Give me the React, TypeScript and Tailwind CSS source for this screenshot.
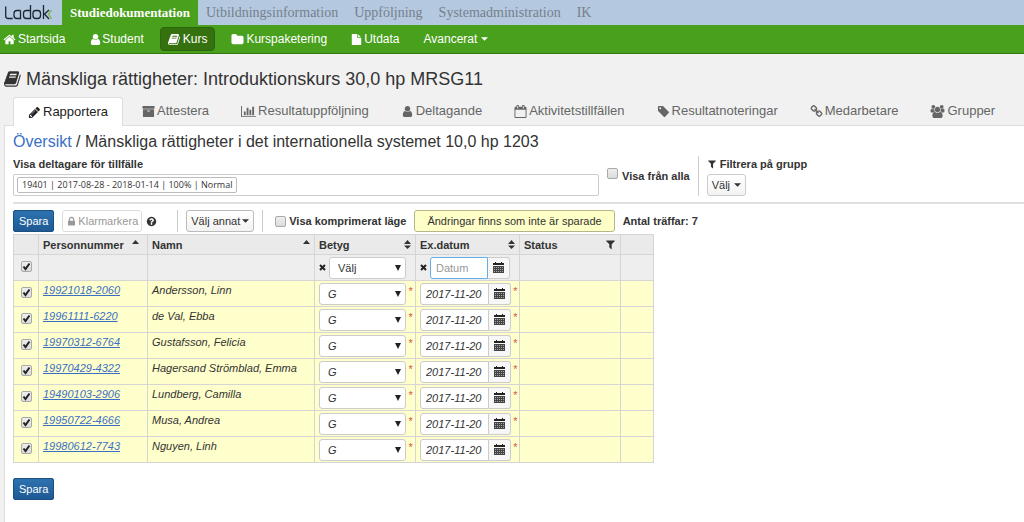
import React, { useState } from 'react';

const icons = {
  home: { w: 1792, d: 'M1472 992v480q0 26-19 45t-45 19h-384v-384h-256v384h-384q-26 0-45-19t-19-45v-480q0-1 .5-3t.5-3l575-474 575 474q1 2 1 6zm223-69l-62 74q-8 9-21 11h-3q-13 0-21-7l-692-577-692 577q-12 8-24 7-13-2-21-11l-62-74q-8-10-7-23.5t11-21.5l719-599q32-26 76-26t76 26l244 204v-195q0-14 9-23t23-9h192q14 0 23 9t9 23v408l219 182q10 8 11 21.5t-7 23.5z' },
  user: { w: 1792, d: 'M1536 1399q0 109-62.5 187t-150.5 78h-854q-88 0-150.5-78t-62.5-187q0-85 8.5-160.5t31.5-152 58.5-131 94-89 134.5-34.5q131 128 313 128t313-128q76 0 134.5 34.5t94 89 58.5 131 31.5 152 8.5 160.5zm-256-887q0 159-112.5 271.5t-271.5 112.5-271.5-112.5-112.5-271.5 112.5-271.5 271.5-112.5 271.5 112.5 112.5 271.5z' },
  book: { w: 1792, d: 'M1639 478q40 57 18 129l-275 906q-19 64-76.5 107.5t-122.5 43.5h-923q-77 0-148.5-53.5t-99.5-131.5q-24-67-2-127 0-4 3-27t4-37q1-8-3-21.5t-3-19.5q2-11 8-21t16.5-23.5 16.5-23.5q23-38 45-91.5t30-91.5q3-10 .5-30t-.5-28q3-11 17-28t17-23q21-36 42-92t25-90q1-9-2.5-32t.5-28q4-13 22-30.5t22-22.5q19-26 42.5-84.5t27.5-96.5q1-8-3-25.5t-2-26.5q2-8 9-18t18-23 17-21q8-12 16.5-30.5t15-35 16-36 19.5-32 26.5-23.5 36-11.5 47.5 5.5l-1 3q38-9 51-9h761q74 0 114 56t18 130l-274 906q-36 119-71.5 153.5t-128.5 34.5h-869q-27 0-38 15-11 16-1 43 24 70 144 70h923q29 0 56-15.5t35-41.5l300-987q7-22 5-57 38 15 59 43zm-1064 2q-4 13 2 22.5t20 9.5h608q13 0 25.5-9.5t16.5-22.5l21-64q4-13-2-22.5t-20-9.5h-608q-13 0-25.5 9.5t-16.5 22.5zm-83 256q-4 13 2 22.5t20 9.5h608q13 0 25.5-9.5t16.5-22.5l21-64q4-13-2-22.5t-20-9.5h-608q-13 0-25.5 9.5t-16.5 22.5z' },
  folder: { w: 1792, d: 'M1728 608v704q0 92-66 158t-158 66h-1216q-92 0-158-66t-66-158v-960q0-92 66-158t158-66h320q92 0 158 66t66 158v32h672q92 0 158 66t66 158z' },
  file: { w: 1792, d: 'M1152 512v-472q22 14 36 28l408 408q14 14 28 36h-472zm-128 32q0 40 28 68t68 28h544v1056q0 40-28 68t-68 28h-1344q-40 0-68-28t-28-68v-1600q0-40 28-68t68-28h800v544z' },
  pencil: { w: 1792, d: 'M491 1536l91-91-235-235-91 91v107h128v128h107zm523-928q0-22-22-22-10 0-17 7l-542 542q-7 7-7 17 0 22 22 22 10 0 17-7l542-542q7-7 7-17zm-54-192l416 416-832 832h-416v-416zm683 96q0 53-37 90l-166 166-416-416 166-165q36-38 90-38 53 0 91 38l235 234q37 39 37 91z' },
  archive: { w: 1792, d: 'M1088 832q0-26-19-45t-45-19h-256q-26 0-45 19t-19 45 19 45 45 19h256q26 0 45-19t19-45zm576-192v960q0 26-19 45t-45 19h-1408q-26 0-45-19t-19-45v-960q0-26 19-45t45-19h1408q26 0 45 19t19 45zm64-448v256q0 26-19 45t-45 19h-1536q-26 0-45-19t-19-45v-256q0-26 19-45t45-19h1536q26 0 45 19t19 45z' },
  chart: { w: 2048, d: 'M640 896v512h-256v-512h256zm384-512v1024h-256v-1024h256zm1024 1152v128h-2048v-1536h128v1408h1920zm-640-896v768h-256v-768h256zm384-384v1152h-256v-1152h256z' },
  calendarO: { w: 1792, d: 'M192 1664h1408v-1024h-1408v1024zm384-1216v-288q0-14-9-23t-23-9h-64q-14 0-23 9t-9 23v288q0 14 9 23t23 9h64q14 0 23-9t9-23zm768 0v-288q0-14-9-23t-23-9h-64q-14 0-23 9t-9 23v288q0 14 9 23t23 9h64q14 0 23-9t9-23zm384-64v1280q0 52-38 90t-90 38h-1408q-52 0-90-38t-38-90v-1280q0-52 38-90t90-38h128v-96q0-66 47-113t113-47h64q66 0 113 47t47 113v96h384v-96q0-66 47-113t113-47h64q66 0 113 47t47 113v96h128q52 0 90 38t38 90z' },
  tag: { w: 1792, d: 'M576 448q0-53-37.5-90.5t-90.5-37.5-90.5 37.5-37.5 90.5 37.5 90.5 90.5 37.5 90.5-37.5 37.5-90.5zm1067 576q0 53-37 90l-491 492q-39 37-91 37-53 0-90-37l-715-716q-38-37-64.5-101t-26.5-117v-416q0-52 38-90t90-38h416q53 0 117 26.5t102 64.5l715 714q37 39 37 91z' },
  link: { w: 1792, d: 'M1520 1216q0-40-28-68l-208-208q-28-28-68-28-42 0-72 32 3 3 19 18.5t21.5 21.5 15 19 13 25.5 3.5 27.5q0 40-28 68t-68 28q-15 0-27.5-3.5t-25.5-13-19-15-21.5-21.5-18.5-19q-33 31-33 73 0 40 28 68l206 207q27 27 68 27 40 0 68-26l147-146q28-28 28-67zm-703-705q0-40-28-68l-206-207q-28-28-68-28-39 0-68 27l-147 146q-28 28-28 67 0 40 28 68l208 208q27 27 68 27 42 0 72-31-3-3-19-18.5t-21.5-21.5-15-19-13-25.5-3.5-27.5q0-40 28-68t68-28q15 0 27.5 3.5t25.5 13 19 15 21.5 21.5 18.5 19q33-31 33-73zm895 705q0 120-85 203l-147 146q-83 83-203 83-121 0-204-85l-206-207q-83-83-83-203 0-123 88-209l-88-88q-86 88-208 88-120 0-204-84l-208-208q-84-84-84-204t85-203l147-146q83-83 203-83 121 0 204 85l206 207q83 83 83 203 0 123-88 209l88 88q86-88 208-88 120 0 204 84l208 208q84 84 84 204z' },
  users: { w: 1920, d: 'M593 896q-162 5-265 128h-134q-82 0-138-40.5t-56-118.5q0-353 124-353 6 0 43.5 21t97.5 42.5 119 21.5q67 0 133-23-5 37-5 66 0 159 93 287zm1071 637q0 120-73 189.5t-194 69.5h-874q-121 0-194-69.5t-73-189.5q0-53 3.5-103.5t14-109 26.5-108.5 43-97.5 62-81 85.5-53.5 111.5-20q10 0 43 21.5t73 48 107 48 135 21.5 135-21.5 107-48 73-48 43-21.5q61 0 111.5 20t85.5 53.5 62 81 43 97.5 26.5 108.5 14 109 3.5 103.5zm-1024-1277q0 106-75 181t-181 75-181-75-75-181 75-181 181-75 181 75 75 181zm704 384q0 159-112.5 271.5t-271.5 112.5-271.5-112.5-112.5-271.5 112.5-271.5 271.5-112.5 271.5 112.5 112.5 271.5zm576 225q0 78-56 118.5t-138 40.5h-134q-103-123-265-128 93-128 93-287 0-29-5-66 66 23 133 23 59 0 119-21.5t97.5-42.5 43.5-21q124 0 124 353zm-128-609q0 106-75 181t-181 75-181-75-75-181 75-181 181-75 181 75 75 181z' },
  filter: { w: 1792, d: 'M1595 295q17 41-14 70l-493 493v742q0 42-39 59-13 5-25 5-27 0-45-19l-256-256q-19-19-19-45v-486l-493-493q-31-29-14-70 17-39 59-39h1280q42 0 59 39z' },
  lock: { w: 1792, d: 'M640 768h512v-192q0-106-75-181t-181-75-181 75-75 181v192zm832 96v576q0 40-28 68t-68 28h-960q-40 0-68-28t-28-68v-576q0-40 28-68t68-28h32v-192q0-184 132-316t316-132 316 132 132 316v192h32q40 0 68 28t28 68z' },
  question: { w: 1792, d: 'M1024 1376v-192q0-14-9-23t-23-9h-192q-14 0-23 9t-9 23v192q0 14 9 23t23 9h192q14 0 23-9t9-23zm256-672q0-88-55.5-163t-138.500-116-170.500-41q-243 0-371 213-15 24 8 42l132 100q7 6 19 6 16 0 25-12 53-68 86-92 34-24 86-24 48 0 85.500 26t37.500 59q0 38-20 61t-68 45q-63 28-115.500 86.500t-52.500 125.500v36q0 14 9 23t23 9h192q14 0 23-9t9-23q0-19 21.500-49.500t54.500-49.500q32-18 49-28.500t46-35 44.500-48 28-60.500 12.500-81zm384 192q0 209-103 385.500t-279.500 279.500-385.500 103-385.500-103-279.500-279.500-103-385.500 103-385.500 279.500-279.500 385.500-103 385.500 103 279.500 279.500 103 385.500z' },
};

type IconName = keyof typeof icons;

const Icon = ({ name, className = 'size-[13px]' }: { name: IconName; className?: string }) => (
  <svg className={`shrink-0 fill-current ${className}`} viewBox={`0 0 ${icons[name].w} 1792`} aria-hidden="true">
    <path d={icons[name].d} />
  </svg>
);

const Caret = () => (
  <svg className="h-[4px] w-[7px] shrink-0 fill-current" viewBox="0 0 8 4" aria-hidden="true">
    <path d="M0 0h8l-4 4z" />
  </svg>
);

const SortIcon = ({ both }: { both?: boolean }) => (
  <svg className="h-[9px] w-[7px] shrink-0 fill-current" viewBox="0 0 7 9" aria-hidden="true">
    <path d="M0 4l3.500-4 3.500 4z" />
    {both && <path d="M0 5.500l3.500 3.500 3.500-3.500z" />}
  </svg>
);

const Cross = () => (
  <svg className="size-[7px] shrink-0" viewBox="0 0 7 7" aria-hidden="true">
    <path d="M1 1l5 5M6 1l-5 5" stroke="#222" strokeWidth="2" />
  </svg>
);

const CalendarIcon = () => (
  <svg className="h-[11px] w-[11px]" viewBox="0 0 11 11" aria-hidden="true">
    <path d="M0 1h2V0h1v1h5V0h1v1h2v2H0z" fill="#222" />
    <path d="M0 4h11v7H0z" fill="#444" />
    <path d="M1 5h1v1H1zM3 5h1v1H3zM5 5h1v1H5zM7 5h1v1H7zM9 5h1v1H9zM1 7h1v1H1zM3 7h1v1H3zM5 7h1v1H5zM7 7h1v1H7zM9 7h1v1H9zM1 9h1v1H1zM3 9h1v1H3zM5 9h1v1H5zM7 9h1v1H7zM9 9h1v1H9z" fill="#aaa" />
  </svg>
);

const Checkbox = ({ id, label, checked, onChange }: { id: string; label?: string; checked: boolean; onChange: () => void }) => (
  <span className="inline-grid size-[11px] shrink-0">
    <input
      type="checkbox"
      id={id}
      aria-label={label}
      checked={checked}
      onChange={onChange}
      className="peer col-start-1 row-start-1 size-[11px] appearance-none rounded-[2px] border border-[#a9a9a9] bg-gradient-to-b from-[#eeeeee] to-[#dcdcdc]"
    />
    <svg className="pointer-events-none invisible col-start-1 row-start-1 size-[11px] peer-checked:visible" viewBox="0 0 11 11" aria-hidden="true">
      <path d="M2.500 5.500l2 2.500 4-5.500" fill="none" stroke="#222" strokeWidth="2" />
    </svg>
  </span>
);

const GradeSelect = ({ label, options, className }: { label: string; options: string[]; className: string }) => (
  <span className={`relative inline-flex ${className}`}>
    <select aria-label={label} className="h-[22px] w-full appearance-none rounded-[3px] border border-[#ccc] bg-white pl-2 text-[11px] text-[#333] [font-style:inherit]">
      {options.map((option) => (
        <option key={option}>{option}</option>
      ))}
    </select>
    <svg className="pointer-events-none absolute top-2 right-[5px] h-[6px] w-[6px]" viewBox="0 0 6 6" aria-hidden="true">
      <path d="M0 0h6l-3 6z" fill="#222" />
    </svg>
  </span>
);

const DateField = ({ label, value, onChange, focused }: { label: string; value: string; onChange: (v: string) => void; focused?: boolean }) => (
  <span className="flex min-w-0 flex-1">
    <input
      type="text"
      aria-label={label}
      placeholder="Datum"
      autoFocus={focused}
      value={value}
      onChange={(e) => onChange(e.target.value)}
      className="h-[22px] w-0 flex-1 rounded-l-[3px] border border-[#ccc] bg-white pl-[5px] text-[11px] text-[#333] [font-style:inherit] outline-none placeholder:text-[#999] focus:border-[#66afe9]"
    />
    <button type="button" aria-label="Öppna kalender" className="flex h-[22px] w-[22px] items-center justify-center rounded-r-[3px] border border-l-0 border-[#ccc] bg-[#f7f7f7]">
      <CalendarIcon />
    </button>
  </span>
);

const SaveButton = () => (
  <button type="button" className="h-[22px] rounded-[2px] border border-[#1c4f80] bg-gradient-to-b from-[#2d72b0] to-[#1f5a94] px-[5px] text-[11px] text-white">
    Spara
  </button>
);

const systemLinks = ['Utbildningsinformation', 'Uppföljning', 'Systemadministration', 'IK'];

const tabs: { icon: IconName; label: string }[] = [
  { icon: 'archive', label: 'Attestera' },
  { icon: 'chart', label: 'Resultatuppföljning' },
  { icon: 'user', label: 'Deltagande' },
  { icon: 'calendarO', label: 'Aktivitetstillfällen' },
  { icon: 'tag', label: 'Resultatnoteringar' },
  { icon: 'link', label: 'Medarbetare' },
  { icon: 'users', label: 'Grupper' },
];

const initialRows = [
  { nr: '19921018-2060', name: 'Andersson, Linn' },
  { nr: '19961111-6220', name: 'de Val, Ebba' },
  { nr: '19970312-6764', name: 'Gustafsson, Felicia' },
  { nr: '19970429-4322', name: 'Hagersand Strömblad, Emma' },
  { nr: '19490103-2906', name: 'Lundberg, Camilla' },
  { nr: '19950722-4666', name: 'Musa, Andrea' },
  { nr: '19980612-7743', name: 'Nguyen, Linh' },
].map((row) => ({ ...row, checked: true, date: '2017-11-20' }));

const App = () => {
  const [rows, setRows] = useState(initialRows);
  const [dateAll, setDateAll] = useState('');
  const [showAll, setShowAll] = useState(false);
  const [compact, setCompact] = useState(false);

  const allChecked = rows.every((row) => row.checked);
  const updateRow = (nr: string, change: Partial<(typeof initialRows)[number]>) =>
    setRows(rows.map((row) => (row.nr === nr ? { ...row, ...change } : row)));

  const cell = 'border border-[#d5d5d5]';

  return (
    <div className="flex min-h-screen flex-col bg-[#f1f1f1] font-['Liberation_Sans',Arial,sans-serif] text-[12px] leading-4 text-[#333]">
      {/* System */}
      <header className="flex h-[25px] items-stretch bg-[#b4c8df] font-['Liberation_Serif','Times_New_Roman',serif] text-[14px] text-[#76808c]">
        <a href="#" aria-label="Ladok" className="flex w-[62px] items-center pl-[5px]">
          <svg className="h-[16px] w-[48px]" viewBox="0 0 48 16" fill="none" stroke="#1b2733" strokeWidth="1.300" aria-hidden="true">
            <path d="M.7 1.500v9.500q0 2.500 2.500 2.500h4.500" />
            <path d="M15.500 5.500h-3.500q-3 0-3 3v2q0 3 3 3h3.500v-8" />
            <path d="M25.500 0v13.500h-4q-3 0-3-3v-2q0-3 3-3h4" />
            <rect x="28" y="5.500" width="7.500" height="8" rx="2.800" />
            <path d="M38.500 0v14M44 5l-4.500 4 4.500 5" />
            <path d="M46.500 5l-3 4 3 5" stroke="#7cb648" />
          </svg>
        </a>
        <nav className="flex items-stretch">
          <a href="#" className="flex items-center bg-[#49a01c] px-2 text-[13px] font-bold text-white">Studiedokumentation</a>
          {systemLinks.map((link) => (
            <a key={link} href="#" className="flex items-center px-2">{link}</a>
          ))}
        </nav>
      </header>

      {/* Huvudmeny */}
      <nav className="flex h-[29px] items-center gap-6 border-b border-[#35780f] bg-[#49a01c] pl-[3px] text-white">
        <a href="#" className="flex items-center gap-[2px]"><Icon name="home" />Startsida</a>
        <a href="#" className="flex items-center"><Icon name="user" />Student</a>
        <a href="#" className="-mx-2 flex h-6 items-center gap-[2px] rounded-[4px] border border-[#2c660c] bg-[#35720f] px-[7px]"><Icon name="book" />Kurs</a>
        <a href="#" className="flex items-center gap-[2px]"><Icon name="folder" />Kurspaketering</a>
        <a href="#" className="flex items-center gap-[2px]"><Icon name="file" className="size-[11px]" />Utdata</a>
        <button type="button" className="flex items-center gap-1">Avancerat <Caret /></button>
      </nav>

      <h1 className="flex items-center gap-1 pt-[14px] pl-1 text-[18px] leading-[22px]">
        <Icon name="book" className="size-[18px]" />
        Mänskliga rättigheter: Introduktionskurs 30,0 hp MRSG11
      </h1>

      {/* Flikar */}
      <nav className="mt-[7px] flex h-7 items-stretch pl-[13px] text-[13px] text-[#666]">
        <a href="#" className="z-10 mr-[3px] -mb-px flex items-center gap-[2px] rounded-t-[3px] border border-b-0 border-[#ddd] bg-white px-[14px] text-[#222]">
          <Icon name="pencil" />Rapportera
        </a>
        {tabs.map((tab) => (
          <a key={tab.label} href="#" className="flex items-center gap-[2px] px-4">
            <Icon name={tab.icon} className={tab.icon === 'chart' || tab.icon === 'users' ? 'h-[13px] w-[15px]' : 'size-[13px]'} />
            {tab.label}
          </a>
        ))}
      </nav>

      <main className="ml-1 flex-1 border-t border-l border-[#ddd] bg-white pl-2">
        <h2 className="pt-[6px] text-[16px] leading-5">
          <a href="#" className="text-[#3b6fc4]">Översikt</a> / Mänskliga rättigheter i det internationella systemet 10,0 hp 1203
        </h2>

        <div className="mt-1 flex items-end border-b-2 border-[#e0e0e0] pb-[6px] text-[11px] font-bold">
          <div className="w-full max-w-[586px]">
            <label htmlFor="tillfalle" className="block leading-4">Visa deltagare för tillfälle</label>
            <div className="mt-[2px] flex h-[22px] items-center rounded-[2px] border border-[#ccc] px-[3px]">
              <span className="rounded-[2px] border border-[#bbb] px-1 font-['Open_Sans',sans-serif] text-[9px] leading-[14px] font-normal whitespace-nowrap">
                19401 | 2017-08-28 - 2018-01-14 | 100% | Normal
              </span>
              <input id="tillfalle" type="text" className="w-0 flex-1 outline-none" />
            </div>
          </div>
          <div className="ml-2 flex h-7 items-start gap-1 whitespace-nowrap">
            <Checkbox id="alla" checked={showAll} onChange={() => setShowAll(!showAll)} />
            <label htmlFor="alla">Visa från alla</label>
          </div>
          <div className="ml-2 border-l border-[#ccc] pl-2">
            <div className="flex items-center"><Icon name="filter" className="size-[10px]" />&nbsp;Filtrera på grupp</div>
            <button type="button" className="mt-[2px] flex h-[22px] items-center gap-1 rounded-[3px] border border-[#ccc] bg-gradient-to-b from-white to-[#f3f3f3] px-1 font-normal">
              Välj <Caret />
            </button>
          </div>
        </div>

        {/* Verktygsrad */}
        <div className="flex items-center pt-[6px] pb-[1px] text-[11px] whitespace-nowrap">
          <SaveButton />
          <button type="button" disabled className="ml-2 flex h-[22px] items-center gap-px rounded-[3px] border border-[#ddd] px-[3px] text-[#999]">
            <Icon name="lock" className="size-[11px]" />Klarmarkera
          </button>
          <span className="ml-1"><Icon name="question" className="size-[11px]" /></span>
          <div className="ml-5 border-l border-[#ccc] pl-2">
            <button type="button" className="flex h-[22px] items-center gap-[2px] rounded-[3px] border border-[#bbb] bg-gradient-to-b from-white to-[#f3f3f3] px-1">
              Välj annat <Caret />
            </button>
          </div>
          <div className="ml-2 flex h-[22px] items-center gap-[3px] border-l border-[#ccc] pl-3 font-bold">
            <Checkbox id="komprimerat" checked={compact} onChange={() => setCompact(!compact)} />
            <label htmlFor="komprimerat">Visa komprimerat läge</label>
          </div>
          <div role="status" className="ml-2 h-[22px] rounded-[3px] border border-[#b5b58a] bg-[#ffffc8] px-3 leading-5">
            Ändringar finns som inte är sparade
          </div>
          <strong className="ml-2">Antal träffar: 7</strong>
        </div>

        <table className="mt-px w-[640px] table-fixed border-collapse text-[11px]">
          <colgroup>
            <col className="w-[25px]" />
            <col className="w-[109px]" />
            <col className="w-[167px]" />
            <col className="w-[101px]" />
            <col className="w-[104px]" />
            <col className="w-[101px]" />
            <col className="w-[33px]" />
          </colgroup>
          <thead className="bg-[#eaeaea] text-left">
            <tr className="h-5">
              <th className={cell}></th>
              <th className={`${cell} px-1`}><span className="flex items-center justify-between pr-1">Personnummer <SortIcon /></span></th>
              <th className={`${cell} px-1`}><span className="flex items-center justify-between">Namn <SortIcon /></span></th>
              <th className={`${cell} px-1`}><span className="flex items-center justify-between">Betyg <SortIcon both /></span></th>
              <th className={`${cell} px-1`}><span className="flex items-center justify-between">Ex.datum <SortIcon both /></span></th>
              <th className={`${cell} px-1`}><span className="flex items-center justify-between">Status <Icon name="filter" className="size-[11px]" /></span></th>
              <th className={cell}></th>
            </tr>
            <tr className="h-[26px] bg-[#eeeeee] font-normal">
              <td className={`${cell} text-center`}>
                <Checkbox
                  id="markera-alla"
                  label="Markera alla"
                  checked={allChecked}
                  onChange={() => setRows(rows.map((row) => ({ ...row, checked: !allChecked })))}
                />
              </td>
              <td className={cell}></td>
              <td className={cell}></td>
              <td className={`${cell} px-1`}>
                <div className="flex items-center gap-[3px]">
                  <Cross />
                  <GradeSelect label="Betyg för alla" options={['Välj', 'G', 'U']} className="w-[77px]" />
                </div>
              </td>
              <td className={`${cell} px-1`}>
                <div className="flex items-center gap-[3px] pr-[5px]">
                  <Cross />
                  <DateField label="Datum för alla" value={dateAll} onChange={setDateAll} focused />
                </div>
              </td>
              <td className={cell}></td>
              <td className={cell}></td>
            </tr>
          </thead>
          <tbody className="bg-[#ffffcc] italic">
            {rows.map((row) => (
              <tr key={row.nr} className="h-[26px]">
                <td className={`${cell} text-center`}>
                  <Checkbox
                    id={`rad-${row.nr}`}
                    label={`Markera ${row.name}`}
                    checked={row.checked}
                    onChange={() => updateRow(row.nr, { checked: !row.checked })}
                  />
                </td>
                <td className={`${cell} px-1 pt-[1px] align-top text-[#3b6fc4]`}><a href="#" className="underline">{row.nr}</a></td>
                <td className={`${cell} px-1 pt-[1px] align-top`}>{row.name}</td>
                <td className={`${cell} pl-1`}>
                  <div className="flex items-start gap-[2px]">
                    <GradeSelect label={`Betyg ${row.name}`} options={['G', 'U']} className="w-[87px]" />
                    <span className="text-[#d9534f]">*</span>
                  </div>
                </td>
                <td className={`${cell} pl-1`}>
                  <div className="flex items-start gap-[2px] pr-[2px]">
                    <DateField label={`Datum ${row.name}`} value={row.date} onChange={(date) => updateRow(row.nr, { date })} />
                    <span className="text-[#d9534f]">*</span>
                  </div>
                </td>
                <td className={cell}></td>
                <td className={cell}></td>
              </tr>
            ))}
          </tbody>
        </table>

        <div className="py-[15px]">
          <SaveButton />
        </div>
      </main>
    </div>
  );
};

export default App;
